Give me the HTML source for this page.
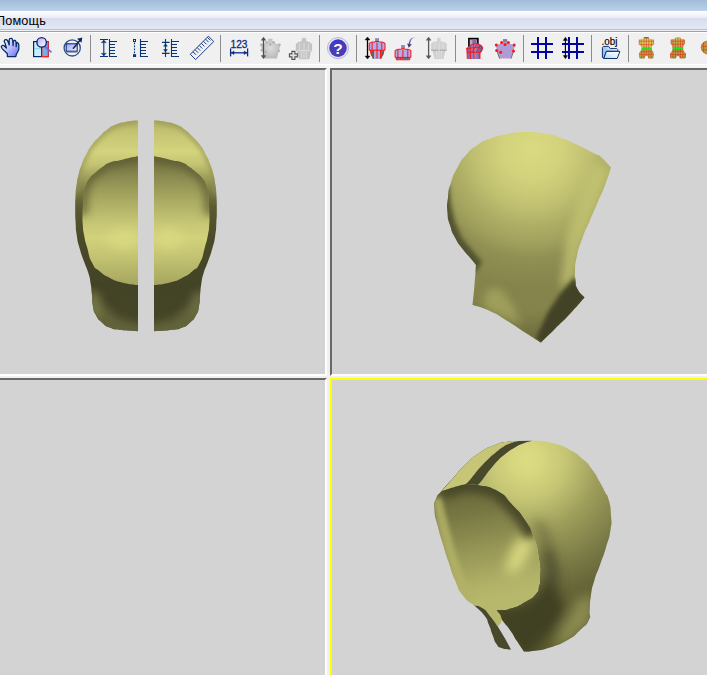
<!DOCTYPE html>
<html><head><meta charset="utf-8">
<style>
html,body{margin:0;padding:0;}
body{width:707px;height:675px;overflow:hidden;background:#f0f0f0;position:relative;font-family:"Liberation Sans",sans-serif;}
.abs{position:absolute;}
#title{left:0;top:0;width:707px;height:11px;background:linear-gradient(#a2bbd8,#b9d1ea);}
#menu{left:0;top:11px;width:707px;height:18px;background:linear-gradient(#ffffff 0px,#e9ecf6 7px,#d8dcee 7px,#e3e8f6 18px);}
#menul1{left:0;top:29px;width:707px;height:1px;background:#b9bfd2;}
#menul2{left:0;top:30px;width:707px;height:1px;background:#eef0f4;}
#menul3{left:0;top:31px;width:707px;height:1px;background:#a0a0a0;}
#menul4{left:0;top:32px;width:707px;height:1px;background:#ffffff;}
#menutext{left:-4px;top:13px;font-size:12.7px;letter-spacing:0.15px;line-height:16px;color:#000;white-space:nowrap;}
#tb{left:0;top:33px;width:707px;height:31px;background:#f0f0f0;}
#tbl1{left:0;top:64px;width:707px;height:1px;background:#ffffff;}
#tbl2{left:0;top:65px;width:707px;height:3px;background:#f5f5f5;}
.sep{position:absolute;top:35px;width:1px;height:27px;background:#8c8c8c;}
.vp{position:absolute;background:#d3d3d3;}
#icons{left:0;top:33px;width:707px;height:31px;}
#heads{left:0;top:0;width:707px;height:675px;}
</style></head><body>
<div class="abs" id="title"></div>
<div class="abs" id="menu"></div>
<div class="abs" id="menul1"></div><div class="abs" id="menul2"></div><div class="abs" id="menul3"></div><div class="abs" id="menul4"></div>
<div class="abs" id="menutext">Помощь</div>
<div class="abs" id="tb"></div>
<div class="abs" id="tbl1"></div><div class="abs" id="tbl2"></div>
<div class="sep" style="left:90px"></div>
<div class="sep" style="left:220px"></div>
<div class="sep" style="left:319px"></div>
<div class="sep" style="left:356px"></div>
<div class="sep" style="left:455px"></div>
<div class="sep" style="left:523px"></div>
<div class="sep" style="left:591px"></div>
<div class="sep" style="left:628px"></div>
<!-- viewports -->
<div class="vp" style="left:-2px;top:68px;width:325px;height:304px;border-top:2px solid #696969;border-left:2px solid #696969;border-right:2px solid #fff;border-bottom:2px solid #fff;"></div>
<div class="vp" style="left:330px;top:68px;width:380px;height:304px;border-top:2px solid #696969;border-left:2px solid #696969;border-right:2px solid #fff;border-bottom:2px solid #fff;"></div>
<div class="vp" style="left:-2px;top:378px;width:325px;height:304px;border-top:2px solid #696969;border-left:2px solid #696969;border-right:2px solid #fff;border-bottom:2px solid #fff;"></div>
<div class="vp" style="left:330px;top:378px;width:380px;height:304px;border:2px solid #ffff00;"></div>
<!--ICONS-->
<svg class="abs" id="icons" viewBox="0 33 707 31" width="707" height="31" style="overflow:hidden">
<defs>
<linearGradient id="gHand" x1="0" y1="0" x2="1" y2="1"><stop offset="0" stop-color="#ffffff"/><stop offset="0.45" stop-color="#c8c8ff"/><stop offset="0.8" stop-color="#8c8cf0"/><stop offset="1" stop-color="#705898"/></linearGradient>
<linearGradient id="gLens" x1="0" y1="0" x2="1" y2="1"><stop offset="0" stop-color="#a8a8f8"/><stop offset="0.6" stop-color="#e0e0ff"/><stop offset="1" stop-color="#ffffff"/></linearGradient>
<linearGradient id="gRect" x1="0" y1="0" x2="1" y2="1"><stop offset="0" stop-color="#a0a0ff"/><stop offset="0.6" stop-color="#d0d0ff"/><stop offset="1" stop-color="#ffffff"/></linearGradient>
<linearGradient id="gHelp" x1="0" y1="0" x2="0" y2="1"><stop offset="0" stop-color="#3838d8"/><stop offset="0.35" stop-color="#4a3cb8"/><stop offset="1" stop-color="#4c3cb0"/></linearGradient>
<linearGradient id="gGray" x1="0" y1="0" x2="1" y2="0"><stop offset="0" stop-color="#c8c8c8"/><stop offset="0.5" stop-color="#b4b4b4"/><stop offset="1" stop-color="#a0a0a0"/></linearGradient>
<linearGradient id="gFold" x1="0" y1="1" x2="1" y2="0"><stop offset="0" stop-color="#a4ccf6"/><stop offset="0.5" stop-color="#e4f0fc"/><stop offset="1" stop-color="#ffffff"/></linearGradient>
<linearGradient id="gArr" x1="1" y1="0" x2="0" y2="1"><stop offset="0" stop-color="#d0d0f8"/><stop offset="0.5" stop-color="#6868b0"/><stop offset="1" stop-color="#202060"/></linearGradient>
<linearGradient id="gPurp" x1="0" y1="0" x2="1" y2="0"><stop offset="0" stop-color="#7060a0"/><stop offset="0.5" stop-color="#a888c8"/><stop offset="1" stop-color="#604880"/></linearGradient>
<radialGradient id="gGray9" cx="0.5" cy="0.45" r="0.6"><stop offset="0" stop-color="#dcdcdc"/><stop offset="1" stop-color="#b8b8b8"/></radialGradient>
<linearGradient id="gFoldB" x1="0" y1="0" x2="1" y2="0"><stop offset="0" stop-color="#90c0f4"/><stop offset="0.6" stop-color="#d8e8fc"/><stop offset="1" stop-color="#ffffff"/></linearGradient>
<linearGradient id="gBody" x1="0" y1="0" x2="0" y2="1"><stop offset="0" stop-color="#d6d66c"/><stop offset="0.4" stop-color="#cccc64"/><stop offset="0.55" stop-color="#a4a44c"/><stop offset="0.8" stop-color="#b0a850"/><stop offset="1" stop-color="#a09040"/></linearGradient>
<linearGradient id="gBody2" x1="0" y1="0" x2="0" y2="1"><stop offset="0" stop-color="#c8c864"/><stop offset="0.4" stop-color="#b8b458"/><stop offset="0.55" stop-color="#98984a"/><stop offset="0.8" stop-color="#b0a850"/><stop offset="1" stop-color="#988c40"/></linearGradient>
</defs>
<!-- 1 hand -->
<path d="M7.3 56.5 L7.4 53.8 L2.1 48.6 L1.2 46.6 L2.4 45.3 L3.8 45.5 L6.4 48 L5.2 43.6 L4.1 41.2 L4.8 39.8 L6.4 39.5 L7.8 41 L9.2 45 L9.2 40 L9.8 38.5 L11.8 38.4 L12.6 39.8 L13.1 45.6 L13.3 41.5 L14.2 40.4 L15.4 40.4 L16 42 L16.2 46.6 L16.4 43.5 L17.2 42.4 L18.4 43.4 L18.8 45 L18.8 49.2 L17.8 51.7 L16.4 54.2 L15.8 56.5 Z" fill="url(#gHand)" stroke="#002c6c" stroke-width="1.25" stroke-linejoin="round"/>
<!-- 2 zoom grid -->
<rect x="33.6" y="41.6" width="14.6" height="15" fill="#c4f0ff" stroke="#002a6a" stroke-width="1.2"/>
<line x1="34" y1="48.7" x2="48" y2="48.7" stroke="#90c8e8" stroke-width="1"/>
<rect x="41.8" y="41.8" width="6.4" height="14.8" fill="#78ace4" stroke="#ff2020" stroke-width="1.1"/>
<line x1="41.5" y1="42" x2="41.5" y2="56.5" stroke="#002a6a" stroke-width="0.8"/>
<line x1="45.5" y1="47" x2="51" y2="51.8" stroke="#7468c8" stroke-width="1.7" stroke-linecap="round"/>
<circle cx="41.6" cy="42.4" r="4.7" fill="url(#gLens)" stroke="#10206c" stroke-width="1.3"/>
<!-- 3 circle rect arrow -->
<circle cx="72.2" cy="47.9" r="8.1" fill="none" stroke="#2c4c80" stroke-width="1.3"/>
<rect x="66.2" y="43.8" width="11" height="7.4" fill="url(#gRect)" stroke="#10306c" stroke-width="1.1"/>
<line x1="66" y1="52.4" x2="77.5" y2="52.4" stroke="#7c94b8" stroke-width="0.9"/>
<line x1="73" y1="48.7" x2="80" y2="40.2" stroke="#0c2c64" stroke-width="1.6"/>
<path d="M77 38.8 L82.3 37.6 L81.5 42.8 Z" fill="#0c2c64"/>
<!-- 4 height lines -->
<g stroke="#083478" stroke-width="1.1" fill="none">
<path d="M100 39.5 H108 M100 56.5 H108 M103.8 39.5 V56.5"/>
<path d="M101.3 42.6 L103.8 40.4 L106.3 42.6 Z M101.3 53.4 L103.8 55.6 L106.3 53.4 Z" fill="#083478" stroke-width="0.5"/>
<path d="M109.5 39 V57 M109.5 41.5 H117.0 M109.5 56.5 H117.0 M109.5 44.5 H115.0 M109.5 47.5 H115.0 M109.5 50.5 H115.0 M109.5 53.5 H115.0"/>
</g>
<!-- 5 dotted -->
<g stroke="#083478" stroke-width="1.1" fill="none">
<rect x="133.5" y="39.5" width="2" height="2" stroke-width="1"/>
<line x1="134.5" y1="42.5" x2="134.5" y2="54" stroke-dasharray="1.8 1.2"/>
<rect x="133" y="54.2" width="3.1" height="2.8" fill="#083478" stroke="none"/>
<path d="M140.5 39 V57 M140.5 41.5 H148.0 M140.5 56.5 H148.0 M140.5 44.5 H146.0 M140.5 47.5 H146.0 M140.5 50.5 H146.0 M140.5 53.5 H146.0"/>
</g>
<!-- 6 -->
<g stroke="#083478" stroke-width="1.1" fill="none">
<path d="M165.5 39 V57 M162 42.4 H169.6 M162 53.4 H169.6"/>
<path d="M163.6 46.2 L165.5 43.8 L167.4 46.2 Z M163.6 49.6 L165.5 52 L167.4 49.6 Z" fill="#083478" stroke-width="0.5"/>
<path d="M171.5 39 V57 M171.5 41.5 H179.0 M171.5 56.5 H179.0 M171.5 44.5 H177.0 M171.5 47.5 H177.0 M171.5 50.5 H177.0 M171.5 53.5 H177.0"/>
</g>
<!-- 7 ruler -->
<g stroke="#1c3c84" stroke-width="1" fill="none">
<path d="M208.4 36.2 L213.8 41.5 L195.6 59.6 L190.3 54.3 Z"/>
<path d="M192.9 51.7 L196 54.8 M195 49.6 L198.1 52.7 M197.1 47.5 L200.2 50.6 M199.2 45.4 L202.3 48.5 M201.3 43.3 L204.4 46.4 M203.4 41.2 L206.5 44.3 M205.5 39.1 L208.6 42.2 M207.3 37.3 L210.4 40.4"/>
</g>
<!-- 8 123 -->
<text x="230.6" y="48" font-family="Liberation Sans, sans-serif" font-size="10px" fill="#0c2c84" stroke="#0c2c84" stroke-width="0.3" textLength="16.8" lengthAdjust="spacingAndGlyphs">123</text>
<g stroke="#0c2c84" stroke-width="1.3" fill="#0c2c84">
<line x1="230.6" y1="48.4" x2="230.6" y2="56.4"/><line x1="247.6" y1="48.4" x2="247.6" y2="56.4"/>
<line x1="231" y1="52.8" x2="247" y2="52.8"/>
<path d="M231.4 52.8 L234 51 L234 54.6 Z M246.8 52.8 L244.2 51 L244.2 54.6 Z" stroke-width="0.5"/>
</g>
<!-- 9 gray torso + arrow (disabled) -->
<path d="M268 38.8 H272.6 V42 L275.5 43.5 L280.2 44.3 L279.3 50 L276.8 58.4 H264.5 L262 50 L260.7 44.3 L265 43.5 L268 42 Z" fill="url(#gGray9)"/>
<g fill="#b4b4b4"><circle cx="266.6" cy="42.3" r="1.4"/><circle cx="273.6" cy="42.3" r="1.4"/><circle cx="270.2" cy="44.4" r="1.4"/><circle cx="261.4" cy="44.8" r="1.4"/><circle cx="279.4" cy="44.8" r="1.4"/><circle cx="261.9" cy="50.2" r="1.4"/><circle cx="278.7" cy="50.8" r="1.4"/><circle cx="265.8" cy="52" r="1.4"/></g>
<g stroke="#505050" stroke-width="1.3" fill="#505050">
<line x1="263.5" y1="39" x2="263.5" y2="57"/>
<path d="M263.5 37.1 L261.2 40.3 H265.8 Z M263.5 58.8 L261.2 55.6 H265.8 Z" stroke-width="0.4"/>
</g>
<!-- 10 gray torso + plus -->
<path d="M302.3 38.4 H305.7 V41.6 L309.5 42.6 L311.6 44 V50.7 L310.4 51.5 L309 58.8 H299.3 L297.6 51.5 L296.3 50.7 V44 L298.4 42.6 L302.3 41.6 Z" fill="#c6c6c6" stroke="#b0b0b0" stroke-width="0.6"/>
<path d="M299.6 43.5 V50 M304 43 V58.5 M308.4 43.5 V50 M296.8 50.6 H311.2 M301.6 51 V58.5 M306.4 51 V58.5" stroke="#dedede" stroke-width="0.9" fill="none"/>
<path d="M291.9 51.4 H294.9 V53.9 H297.4 V56.9 H294.9 V59.4 H291.9 V56.9 H289.4 V53.9 H291.9 Z" fill="#e2e2e2" stroke="#545454" stroke-width="1.1"/>
<!-- 11 help -->
<circle cx="338" cy="48.1" r="10.6" fill="#e6e9e6" stroke="#a4aaec" stroke-width="0.8"/>
<circle cx="338" cy="48.1" r="8.8" fill="url(#gHelp)"/>
<text x="338" y="53.6" text-anchor="middle" font-family="Liberation Sans, sans-serif" font-weight="bold" font-size="15.5px" fill="#ffffff">?</text>
<!-- 12 torso red + black arrow -->
<g stroke="#000" stroke-width="1.3" fill="#000">
<line x1="367.5" y1="39" x2="367.5" y2="57"/>
<path d="M367.5 37 L365 40 H370 Z M367.5 59 L365 56 H370 Z" stroke-width="0.4"/>
</g>
<rect x="375.1" y="38.2" width="3.9" height="3.6" fill="#9484a6"/>
<path d="M370.4 50.2 L371 54 L372.4 58.6 H381.8 L383.2 54 L383.8 50.2 Z" fill="#567462"/>
<path d="M373.3 50.2 H380.6 V58.6 H373.3 Z" fill="#aca4dc"/>
<path d="M372 42 H374.8 L375.2 41.5 H378.9 L379.3 42 H382.2 L385 43.2 V50.2 H369.2 V43.2 Z" fill="#b0acec" stroke="#ff0c0c" stroke-width="1"/>
<path d="M372.1 42.5 V50 M377 42.5 V58.4 M381.8 42.5 V50 M373.3 50.2 V58.6 M380.6 50.2 V58.6 M370.4 50.2 L371 54 L371.8 56 M383.8 50.2 L383.2 54 L382.4 56" stroke="#ff0c0c" stroke-width="0.95" fill="none"/>
<!-- 13 small torso + curved arrow -->
<rect x="401.1" y="45.1" width="3.8" height="3.8" fill="#9484a6"/>
<path d="M396.2 57.4 H409.8 V59.8 H396.2 Z" fill="#7888a8" stroke="#ff0c0c" stroke-width="0.8"/>
<path d="M397.8 49.3 H400.8 L401.2 48.8 H404.8 L405.2 49.3 H408.2 L410.9 50.4 V57.4 H395.1 V50.4 Z" fill="#b0acec" stroke="#ff0c0c" stroke-width="1"/>
<path d="M397.9 50 V59.6 M402.9 50 V59.6 M407.8 50 V59.6 M400.4 57.6 V59.6 M405.4 57.6 V59.6" stroke="#ff0c0c" stroke-width="0.95" fill="none"/>
<path d="M416.8 38.8 C412.8 36.6 410.8 40 410.1 43.9 L411.9 44.4 L408.8 47.8 L407.1 43.4 L408.7 43.7 C409.4 39 412.4 35.6 416.8 38.8 Z" fill="url(#gArr)"/>
<!-- 14 gray torso + gray arrow -->
<g stroke="#585858" stroke-width="1.3" fill="#585858">
<line x1="428.6" y1="39" x2="428.6" y2="57"/>
<path d="M428.6 37 L426.2 40.2 H431 Z M428.6 59 L426.2 55.8 H431 Z" stroke-width="0.4"/>
</g>
<path d="M437.2 37.8 H440.6 V41.2 L444.5 42 L446.8 43.6 V49.6 H431.1 V43.6 L433.4 42 L437.2 41.2 Z" fill="#d2d2d2"/>
<path d="M432.6 51 L433.6 55 L434.6 59 H443.4 L444.4 55 L445.3 51 Z" fill="#cecece"/>
<path d="M431.2 49.4 H446.7 V51 H431.2 Z" fill="#b2b2b2"/>
<path d="M435 43 V49 M439 43 V58.5 M443 43 V49 M436.5 51 V58.5 M441.5 51 V58.5" stroke="#e2e2e2" stroke-width="0.9" fill="none"/>
<!-- 15 purple torso in frame -->
<rect x="468.9" y="38.6" width="9" height="8" fill="#b8a8b4" stroke="#000" stroke-width="1.6"/>
<rect x="472.4" y="39.5" width="4" height="6" fill="#8c64b4"/>
<path d="M470 45.5 L473 44 L478 43.8 L481.5 45.5 L483 48 L482 51.5 L480 53 L480 59 H467.5 L467 52 L466.4 48 Z" fill="url(#gPurp)"/>
<path d="M470 45.5 L473 44 L478 43.8 L481.5 45.5 L483 48 M466.8 48 L467.3 59 M467 52.3 H480.3 M466.6 48.5 L480 47 M470 45.5 L470.5 59 M473.6 44 L474 59 M477 44 L472 52 M480.3 45 L476.5 52 M480 53 V59 M482.8 48 L480.2 53" stroke="#ff1010" stroke-width="0.9" fill="none"/>
<!-- 16 torso with dots -->
<path d="M503 39.2 H507.1 V42.5 L510 44 L515 44.8 L513.6 51 L511 58.6 H499.6 L497 51 L495.8 44.8 L500 44 L503 42.5 Z" fill="#b09cd4"/>
<path d="M497 51 L499.6 58.6 M513.6 51 L511 58.6" stroke="#6c6454" stroke-width="0.9" fill="none"/>
<rect x="503" y="39.2" width="4.1" height="2.5" fill="#887898"/>
<g fill="#ff1414"><circle cx="501.6" cy="42.5" r="1.5"/><circle cx="508.4" cy="42.5" r="1.5"/><circle cx="505" cy="44.6" r="1.5"/><circle cx="496.3" cy="45" r="1.5"/><circle cx="514.2" cy="45" r="1.5"/><circle cx="496.7" cy="50.4" r="1.5"/><circle cx="513.5" cy="51" r="1.5"/><circle cx="500.6" cy="52.3" r="1.5"/></g>
<!-- 17 hash -->
<g fill="#0404a0">
<rect x="537" y="37" width="2" height="22"/><rect x="545" y="37" width="2" height="22"/>
<rect x="531" y="43" width="22" height="2"/><rect x="531" y="51" width="22" height="2"/>
</g>
<!-- 18 hash + arrow -->
<g fill="#0404a0">
<rect x="568" y="37" width="2" height="22"/><rect x="576" y="37" width="2" height="22"/>
<rect x="562" y="43" width="22" height="2"/><rect x="562" y="51" width="22" height="2"/>
</g>
<g stroke="#000" stroke-width="1.1" fill="#000">
<line x1="565.4" y1="39" x2="565.4" y2="57"/>
<path d="M565.4 37.2 L563.2 40.4 H567.6 Z M565.4 58.8 L563.2 55.6 H567.6 Z" stroke-width="0.4"/>
</g>
<!-- 19 .obj folder -->
<text x="601.6" y="44.8" font-family="Liberation Sans, sans-serif" font-size="10.5px" fill="#000" stroke="#000" stroke-width="0.15" textLength="15.8" lengthAdjust="spacingAndGlyphs">.obj</text>
<path d="M603.4 46.4 H608.6 L610.2 48.6 H616.8 L617.8 49.6 V51.2 H606.4 L603.7 58.4 L602.4 57.4 V47.4 Z" fill="url(#gFoldB)" stroke="#0c3470" stroke-width="1" stroke-linejoin="round"/>
<path d="M606.4 51.4 H619.9 L617.2 58.5 H603.7 Z" fill="url(#gFold)" stroke="#0c3470" stroke-width="1" stroke-linejoin="round"/>
<!-- 20 body front -->
<g>
<path d="M643.9 37 H648.7 L649 38.6 L653.2 39.2 L653.8 41 L653.6 44.7 L652.2 46 L651.8 48 L651.9 50 L653.8 53 L653.8 55.5 L653.2 58.6 H648.3 L647.9 56.4 L646.5 55.6 L645.1 56.4 L644.7 58.6 H639.5 L638.9 55.5 L638.9 53 L641.4 50 L641.5 48 L641 46 L639.2 44.7 L638.9 41 L639.5 39.2 L643.6 38.6 Z" fill="url(#gBody)"/>
<rect x="643.9" y="37" width="4.8" height="1.5" fill="#74742e"/>
<path d="M641.3 39.5 V46 M644 38.5 V58 M646.4 38.5 V55.6 M648.8 38.5 V58 M651.4 39.5 V46 M639 41.2 H653.8 M639.5 44.6 H653.2 M640.5 51.8 H652.8 M639 54.4 H653.8 M641.6 50 V58.4 M651.2 50 V58.4 M639.2 39.6 V44.6 M653.6 39.6 V44.6" stroke="#e8401c" stroke-width="0.8" fill="none" opacity="0.8"/>
<path d="M641.5 49 H651.8" stroke="#18e818" stroke-width="1.7"/>
</g>
<!-- 21 body back -->
<g>
<path d="M675.6 37 H680.3 L680.6 38.6 L684.2 39.2 L684.7 41 L684.5 44.3 L682.8 46.5 L682.6 48.2 L682.9 50 L685.9 53.5 L685.8 55.5 L685 58.6 H679.8 L679.2 56.6 L677.9 56 L676.6 56.6 L676 58.6 H670.9 L670.1 55.5 L670 53.5 L672.7 50 L672.8 48.2 L672.6 46.5 L671 44.3 L670.8 41 L671.3 39.2 L675.3 38.6 Z" fill="url(#gBody2)"/>
<path d="M673 39.5 V58 M675.4 38.5 V58 M677.9 38 V56 M680.4 38.5 V58 M682.8 39.5 V58 M671 41.2 H684.6 M671.4 44.2 H684.2 M672.4 51.4 H683.4 M670.2 54.4 H685.8 M671.2 39.6 V44 M684.4 39.6 V44 M670.6 53.5 V58 M685.4 53.5 V58" stroke="#e03c1c" stroke-width="0.85" fill="none" opacity="0.85"/>
<path d="M672.8 48.3 H682.7" stroke="#18e818" stroke-width="1.6"/>
</g>
<!-- 22 partial -->
<path d="M707 41.2 L704 42 L701.8 44.4 L701.2 47.5 L702 50.5 L704.4 53 L707 54 Z" fill="#b09848"/>
<path d="M707 41.2 L704 42 L701.8 44.4 L701.2 47.5 L702 50.5 L704.4 53 L707 54 M703.5 42.4 V52.4 M701.5 46.5 H707 M702 50 H707" fill="none" stroke="#e0401c" stroke-width="0.8" opacity="0.85"/>
</svg>
</svg>
<!--/ICONS-->
<!--HEADS-->
<svg class="abs" id="heads" viewBox="0 0 707 675" width="707" height="675" style="overflow:hidden">
<defs>
<filter id="b2" x="-30%" y="-30%" width="160%" height="160%"><feGaussianBlur stdDeviation="2"/></filter>
<filter id="b4" x="-30%" y="-30%" width="160%" height="160%"><feGaussianBlur stdDeviation="4"/></filter>
<filter id="b6" x="-30%" y="-30%" width="160%" height="160%"><feGaussianBlur stdDeviation="6"/></filter>
<filter id="b10" x="-40%" y="-40%" width="180%" height="180%"><feGaussianBlur stdDeviation="10"/></filter>
<filter id="b1" x="-30%" y="-30%" width="160%" height="160%"><feGaussianBlur stdDeviation="1"/></filter>
<clipPath id="h1clip"><path d="M138 120.2 C134.1 120.7 133.7 120.2 126.3 121.7 C118.9 123.2 122.3 121.9 115.9 124.6 C109.5 127.3 112.4 125.8 107.0 129.8 C101.6 133.8 104.5 131.6 99.6 136.5 C94.7 141.4 96.6 138.7 92.2 144.6 C87.8 150.5 89.7 147.9 86.3 154.3 C82.9 160.7 84.5 157.2 81.9 163.9 C79.3 170.6 80.3 167.4 78.6 174.3 C76.9 181.2 77.7 177.7 76.7 184.6 C75.7 191.5 76.1 186.5 75.6 195.0 C75.1 203.5 75.2 201.0 75.2 210.0 C75.2 219.0 75.1 213.7 75.6 222.0 C76.1 230.3 75.4 226.2 76.7 235.0 C78.0 243.8 77.1 239.4 79.6 248.3 C82.1 257.2 81.1 253.3 84.1 261.7 C87.1 270.1 86.3 266.1 88.5 273.5 C90.7 280.9 89.6 277.0 90.7 283.9 C91.8 290.8 91.1 286.9 91.9 294.3 C92.7 301.7 91.7 299.2 93.0 306.1 C94.3 313.0 92.9 309.6 95.9 315.0 C98.9 320.4 97.2 318.2 101.9 322.4 C106.6 326.6 103.8 325.1 110.0 327.6 C116.2 330.1 111.1 328.6 120.4 329.8 C129.7 331.0 132.1 330.8 138.0 331.3 Z"/><path d="M154 120.2 C157.9 120.7 158.3 120.2 165.7 121.7 C173.1 123.2 169.7 121.9 176.1 124.6 C182.5 127.3 179.6 125.8 185.0 129.8 C190.4 133.8 187.5 131.6 192.4 136.5 C197.3 141.4 195.4 138.7 199.8 144.6 C204.2 150.5 202.3 147.9 205.7 154.3 C209.1 160.7 207.5 157.2 210.1 163.9 C212.7 170.6 211.7 167.4 213.4 174.3 C215.1 181.2 214.3 177.7 215.3 184.6 C216.3 191.5 215.9 186.5 216.4 195.0 C216.9 203.5 216.8 201.0 216.8 210.0 C216.8 219.0 216.9 213.7 216.4 222.0 C215.9 230.3 216.6 226.2 215.3 235.0 C214.0 243.8 214.9 239.4 212.4 248.3 C209.9 257.2 210.9 253.3 207.9 261.7 C204.9 270.1 205.7 266.1 203.5 273.5 C201.3 280.9 202.4 277.0 201.3 283.9 C200.2 290.8 200.9 286.9 200.1 294.3 C199.3 301.7 200.3 299.2 199.0 306.1 C197.7 313.0 199.1 309.6 196.1 315.0 C193.1 320.4 194.8 318.2 190.1 322.4 C185.4 326.6 188.2 325.1 182.0 327.6 C175.8 330.1 180.9 328.6 171.6 329.8 C162.3 331.0 159.9 330.8 154.0 331.3 Z"/></clipPath>
<clipPath id="h1in"><path d="M138 156.2 C135.1 156.8 135.2 156.7 129.3 158.0 C123.4 159.3 126.8 158.7 120.4 160.2 C114.0 161.7 115.9 160.2 110.0 162.4 C104.1 164.6 107.5 163.4 102.6 166.9 C97.7 170.4 99.6 168.9 95.2 172.8 C90.8 176.7 92.5 174.3 89.3 178.7 C86.1 183.1 87.5 180.7 85.6 186.1 C83.7 191.5 84.5 189.1 83.6 195.0 C82.7 200.9 83.3 197.2 83.0 203.9 C82.7 210.6 82.7 208.0 82.6 215.0 C82.5 222.0 82.3 218.3 82.8 225.0 C83.3 231.7 82.7 227.7 84.1 235.0 C85.5 242.3 84.3 237.5 87.0 246.9 C89.7 256.3 88.0 255.0 92.2 263.1 C96.4 271.2 93.7 266.3 99.6 271.3 C105.5 276.3 102.6 274.3 110.0 278.0 C117.4 281.7 112.6 280.0 121.9 282.4 C131.2 284.8 132.6 284.2 138.0 285.1 Z"/><path d="M154 156.2 C156.9 156.8 156.8 156.7 162.7 158.0 C168.6 159.3 165.2 158.7 171.6 160.2 C178.0 161.7 176.1 160.2 182.0 162.4 C187.9 164.6 184.5 163.4 189.4 166.9 C194.3 170.4 192.4 168.9 196.8 172.8 C201.2 176.7 199.5 174.3 202.7 178.7 C205.9 183.1 204.5 180.7 206.4 186.1 C208.3 191.5 207.5 189.1 208.4 195.0 C209.3 200.9 208.7 197.2 209.0 203.9 C209.3 210.6 209.3 208.0 209.4 215.0 C209.5 222.0 209.7 218.3 209.2 225.0 C208.7 231.7 209.3 227.7 207.9 235.0 C206.5 242.3 207.7 237.5 205.0 246.9 C202.3 256.3 204.0 255.0 199.8 263.1 C195.6 271.2 198.3 266.3 192.4 271.3 C186.5 276.3 189.4 274.3 182.0 278.0 C174.6 281.7 179.4 280.0 170.1 282.4 C160.8 284.8 159.4 284.2 154.0 285.1 Z"/></clipPath>
<linearGradient id="h1shell" gradientUnits="userSpaceOnUse" x1="0" y1="120" x2="0" y2="332"><stop offset="0" stop-color="#b2b266"/><stop offset="0.07" stop-color="#c6c674"/><stop offset="0.15" stop-color="#d4d47e"/><stop offset="0.212" stop-color="#c2c272"/><stop offset="0.255" stop-color="#a8a862"/><stop offset="0.307" stop-color="#8a8a50"/><stop offset="0.354" stop-color="#70703f"/><stop offset="0.41" stop-color="#5c5c34"/><stop offset="0.448" stop-color="#55552e"/><stop offset="0.566" stop-color="#4a4a29"/><stop offset="0.78" stop-color="#434326"/><stop offset="1" stop-color="#454527"/></linearGradient>
<linearGradient id="h1int" gradientUnits="userSpaceOnUse" x1="0" y1="156" x2="0" y2="286"><stop offset="0" stop-color="#68683b"/><stop offset="0.18" stop-color="#8e8e52"/><stop offset="0.34" stop-color="#aaaa62"/><stop offset="0.50" stop-color="#c4c474"/><stop offset="0.63" stop-color="#d2d27c"/><stop offset="0.80" stop-color="#c0c070"/><stop offset="1" stop-color="#a4a45f"/></linearGradient>
<clipPath id="h2clip"><path d="M611.0 167.5 C609.0 173.3 609.5 173.3 605.0 185.0 C600.5 196.7 602.5 190.8 597.5 202.5 C592.5 214.2 595.0 208.3 590.0 220.0 C585.0 231.7 586.8 225.8 582.5 237.5 C578.2 249.2 579.5 244.2 577.0 255.0 C574.5 265.8 575.5 261.7 575.0 270.0 C574.5 278.3 574.7 273.7 575.5 280.0 C576.3 286.3 574.5 283.2 577.5 289.0 C580.5 294.8 582.2 294.7 584.5 297.5 C579.7 302.9 579.8 303.3 570.0 313.8 C560.2 324.2 564.7 319.2 555.0 328.8 C545.3 338.3 545.7 337.9 541.0 342.5 C535.7 339.2 536.2 339.7 525.0 332.5 C513.8 325.3 519.2 328.2 507.5 321.0 C495.8 313.8 501.7 316.3 490.0 311.0 C478.3 305.7 478.3 307.0 472.5 305.0 C473.2 298.3 473.3 298.3 474.5 285.0 C475.7 271.7 475.5 271.7 476.0 265.0 C474.3 262.9 475.5 264.2 471.0 258.8 C466.5 253.3 467.8 255.8 462.5 248.8 C457.2 241.7 459.2 245.4 455.0 237.5 C450.8 229.6 452.5 233.3 450.0 225.0 C447.5 216.7 448.2 221.7 447.5 212.5 C446.8 203.3 446.8 207.5 448.0 197.5 C449.2 187.5 447.8 192.5 451.0 182.5 C454.2 172.5 452.5 176.7 457.5 167.5 C462.5 158.3 459.3 162.5 466.0 155.0 C472.7 147.5 469.5 150.4 477.5 145.0 C485.5 139.6 480.8 142.2 490.0 138.8 C499.2 135.2 493.3 136.8 505.0 134.5 C516.7 132.2 511.7 132.2 525.0 132.0 C538.3 131.8 533.3 131.9 545.0 133.8 C556.7 135.6 549.2 133.8 560.0 137.5 C570.8 141.2 565.8 139.6 577.5 145.0 C589.2 150.4 587.5 150.1 595.0 153.8 C602.5 157.4 594.7 151.4 600.0 156.0 C605.3 160.6 607.3 163.7 611.0 167.5 Z"/></clipPath>
<radialGradient id="h2g" gradientUnits="userSpaceOnUse" cx="532" cy="150" r="200"><stop offset="0" stop-color="#dada82"/><stop offset="0.15" stop-color="#d2d27c"/><stop offset="0.3" stop-color="#bebe70"/><stop offset="0.38" stop-color="#aeae66"/><stop offset="0.46" stop-color="#a2a25e"/><stop offset="0.54" stop-color="#909054"/><stop offset="0.685" stop-color="#84844c"/><stop offset="0.8" stop-color="#84844c"/><stop offset="0.925" stop-color="#707040"/></radialGradient>
<clipPath id="h3R"><path d="M532.5 440.5 C535.0 440.7 532.5 439.9 540.0 441.0 C547.5 442.1 545.0 440.8 555.0 443.8 C565.0 446.8 560.8 445.0 570.0 450.0 C579.2 455.0 575.0 452.1 582.5 458.8 C590.0 465.4 586.7 462.1 592.5 470.0 C598.3 477.9 595.8 475.2 600.0 482.5 C604.2 489.8 602.1 486.2 605.0 492.0 C607.9 497.8 606.8 492.3 608.8 500.0 C610.8 507.7 610.4 505.0 611.0 515.0 C611.6 525.0 612.2 519.2 610.5 530.0 C608.8 540.8 609.5 535.8 606.0 547.5 C602.5 559.2 603.8 554.2 600.0 565.0 C596.2 575.8 597.5 570.0 594.5 580.0 C591.5 590.0 592.7 585.0 591.0 595.0 C589.3 605.0 590.2 601.7 589.5 610.0 C588.8 618.3 591.9 613.3 588.8 620.0 C585.6 626.7 587.1 623.3 580.0 630.0 C572.9 636.7 577.5 634.2 567.5 640.0 C557.5 645.8 560.8 643.9 550.0 647.5 C539.2 651.1 543.7 649.4 535.0 650.8 C526.3 652.1 527.7 651.2 524.0 651.5 C521.6 647.8 521.2 647.5 516.7 640.5 C512.2 633.5 515.5 637.6 510.4 630.4 C505.3 623.2 506.1 625.7 501.5 619.0 C496.9 612.3 498.2 613.1 496.5 610.2 C501.1 609.6 500.7 611.2 510.4 608.3 C520.1 605.4 517.1 606.2 525.5 601.4 C533.9 596.6 531.2 598.9 535.6 593.9 C540.0 588.9 537.2 591.8 538.7 586.3 C540.2 580.8 540.0 587.1 540.0 577.5 C540.0 567.9 540.8 570.8 538.8 557.5 C536.7 544.2 538.3 550.0 533.8 537.5 C529.2 525.0 532.1 530.8 525.0 520.0 C517.9 509.2 521.7 514.7 512.5 505.0 C503.3 495.3 509.2 497.7 497.5 491.0 C485.8 484.3 484.2 487.0 477.5 485.0 C478.6 483.9 478.1 485.1 480.9 481.7 C483.7 478.3 482.3 479.7 486.0 474.9 C489.7 470.1 488.0 472.1 492.0 467.3 C496.0 462.5 493.7 464.8 497.9 460.5 C502.1 456.2 499.6 458.5 504.7 454.5 C509.8 450.5 507.3 452.2 513.2 448.6 C519.1 445.0 516.1 446.4 522.5 443.8 C528.9 441.2 529.2 441.8 532.5 440.8 Z"/></clipPath>
<clipPath id="h3L"><path d="M518.3 441 C514.5 441.3 514.8 440.5 507.0 441.8 C499.2 443.1 504.0 441.4 495.0 445.0 C486.0 448.6 490.0 445.8 480.0 452.5 C470.0 459.2 474.2 456.2 465.0 465.0 C455.8 473.8 460.0 470.4 452.5 478.8 C445.0 487.1 448.0 483.3 442.5 490.0 C437.0 496.7 438.7 492.1 436.0 498.8 C433.3 505.4 434.0 501.2 434.5 510.0 C435.0 518.8 434.8 514.2 437.5 525.0 C440.2 535.8 438.8 530.0 442.5 542.5 C446.2 555.0 444.6 550.0 448.8 562.5 C452.9 575.0 450.4 569.2 455.0 580.0 C459.6 590.8 456.2 586.6 462.5 595.0 C468.8 603.4 470.1 601.8 473.9 605.2 C476.8 606.2 477.3 604.7 482.7 608.3 C488.1 611.9 485.0 609.9 490.0 616.0 C495.0 622.1 495.2 623.1 497.8 626.6 C499.0 624.1 501.9 624.5 501.5 619.0 C501.1 613.5 498.2 613.1 496.5 610.2 C501.1 609.6 500.7 611.2 510.4 608.3 C520.1 605.4 517.1 606.2 525.5 601.4 C533.9 596.6 531.2 598.9 535.6 593.9 C540.0 588.9 537.2 591.8 538.7 586.3 C540.2 580.8 540.0 587.1 540.0 577.5 C540.0 567.9 540.8 570.8 538.8 557.5 C536.7 544.2 538.3 550.0 533.8 537.5 C529.2 525.0 532.1 530.8 525.0 520.0 C517.9 509.2 521.7 514.7 512.5 505.0 C503.3 495.3 509.2 497.7 497.5 491.0 C485.8 484.3 484.2 487.0 477.5 485.0 L466 484 C467.3 482.7 466.6 483.9 469.9 480.0 C473.2 476.1 471.6 477.5 475.8 472.4 C480.0 467.3 478.1 469.5 482.6 464.7 C487.1 459.9 484.9 462.1 489.4 457.9 C493.9 453.7 491.7 455.7 496.2 452.0 C500.7 448.3 498.5 449.7 503.0 446.9 C507.5 444.1 504.7 445.5 509.8 443.5 C514.9 441.5 515.5 441.8 518.3 441.0 Z"/></clipPath>
<radialGradient id="h3g" gradientUnits="userSpaceOnUse" cx="527" cy="460" r="160"><stop offset="0" stop-color="#dcdc83"/><stop offset="0.1" stop-color="#d6d67f"/><stop offset="0.25" stop-color="#c4c474"/><stop offset="0.46" stop-color="#9c9c5a"/><stop offset="0.68" stop-color="#7c7c48"/><stop offset="0.85" stop-color="#666639"/><stop offset="1" stop-color="#58582f"/></radialGradient>
<linearGradient id="h3i" gradientUnits="userSpaceOnUse" x1="463" y1="491" x2="485" y2="600"><stop offset="0" stop-color="#6a6a3b"/><stop offset="0.2" stop-color="#767643"/><stop offset="0.55" stop-color="#969656"/><stop offset="0.88" stop-color="#b2b268"/><stop offset="1" stop-color="#b8b86c"/></linearGradient>
</defs>
<g clip-path="url(#h1clip)">
<rect x="70" y="115" width="152" height="220" fill="url(#h1shell)"/>
<g filter="url(#b2)">
<path d="M138 120.2 C134.1 120.7 133.7 120.2 126.3 121.7 C118.9 123.2 122.3 121.9 115.9 124.6 C109.5 127.3 112.4 125.8 107.0 129.8 C101.6 133.8 104.5 131.6 99.6 136.5 C94.7 141.4 96.6 138.7 92.2 144.6 C87.8 150.5 89.7 147.9 86.3 154.3 C82.9 160.7 84.5 157.2 81.9 163.9 C79.3 170.6 80.3 167.4 78.6 174.3 C76.9 181.2 77.7 177.7 76.7 184.6 C75.7 191.5 76.0 191.5 75.6 195.0" fill="none" stroke="#909054" stroke-width="7" opacity="0.55"/>
<path d="M154 120.2 C157.9 120.7 158.3 120.2 165.7 121.7 C173.1 123.2 169.7 121.9 176.1 124.6 C182.5 127.3 179.6 125.8 185.0 129.8 C190.4 133.8 187.5 131.6 192.4 136.5 C197.3 141.4 195.4 138.7 199.8 144.6 C204.2 150.5 202.3 147.9 205.7 154.3 C209.1 160.7 207.5 157.2 210.1 163.9 C212.7 170.6 211.7 167.4 213.4 174.3 C215.1 181.2 214.3 177.7 215.3 184.6 C216.3 191.5 216.0 191.5 216.4 195.0" fill="none" stroke="#909054" stroke-width="7" opacity="0.55"/>
</g>
<g filter="url(#b4)">
<path d="M90 300 L102 304 L118 318 L138 324 L154 324 L174 318 L190 304 L202 300 L202 340 L90 340 Z" fill="#62623a"/>
<path d="M88 290 L99 294 L103 310 L97 320 L88 312 Z" fill="#747445"/>
<path d="M204 290 L193 294 L189 310 L195 320 L204 312 Z" fill="#6c6c42"/>
</g>
</g>
<g clip-path="url(#h1in)">
<rect x="70" y="150" width="152" height="140" fill="url(#h1int)"/>
<g filter="url(#b4)">
<path d="M138 156.2 C135.1 156.8 135.2 156.7 129.3 158.0 C123.4 159.3 126.8 158.7 120.4 160.2 C114.0 161.7 115.9 160.2 110.0 162.4 C104.1 164.6 107.5 163.4 102.6 166.9 C97.7 170.4 99.6 168.9 95.2 172.8 C90.8 176.7 92.5 174.3 89.3 178.7 C86.1 183.1 87.5 180.7 85.6 186.1 C83.7 191.5 84.5 189.1 83.6 195.0 C82.7 200.9 83.3 197.2 83.0 203.9 C82.7 210.6 82.7 211.3 82.6 215.0" fill="none" stroke="#585831" stroke-width="9" opacity="0.8"/>
<path d="M154 156.2 C156.9 156.8 156.8 156.7 162.7 158.0 C168.6 159.3 165.2 158.7 171.6 160.2 C178.0 161.7 176.1 160.2 182.0 162.4 C187.9 164.6 184.5 163.4 189.4 166.9 C194.3 170.4 192.4 168.9 196.8 172.8 C201.2 176.7 199.5 174.3 202.7 178.7 C205.9 183.1 204.5 180.7 206.4 186.1 C208.3 191.5 207.5 189.1 208.4 195.0 C209.3 200.9 208.7 197.2 209.0 203.9 C209.3 210.6 209.3 211.3 209.4 215.0" fill="none" stroke="#585831" stroke-width="9" opacity="0.8"/>
</g>
<g filter="url(#b6)">
<ellipse cx="124" cy="239" rx="15" ry="10" fill="#d9d982" opacity="0.9"/>
<ellipse cx="168" cy="239" rx="15" ry="10" fill="#d9d982" opacity="0.9"/>
</g>
</g>
<g clip-path="url(#h2clip)">
<rect x="440" y="125" width="180" height="225" fill="url(#h2g)"/>
<g filter="url(#b4)">
<path d="M486 290 L500 288 L512 304 L522 326 L500 316 L484 308 Z" fill="#b0b066" opacity="0.6"/>
<path d="M592 166 L612 166 L582 250 L574 280 L560 290 L566 240 L578 200 Z" fill="#c4c474" opacity="0.75"/>
</g>
<g filter="url(#b2)">
<path d="M444 180 L449 185 L451 205 L455 222 L462 238 L472 250 L482 262 L476 272 L440 260 Z" fill="#4e4e2b" opacity="0.9"/>
</g>
<g filter="url(#b2)">
<path d="M574 278 L590 298 L541 346 L536 338 L548 312 L560 294 Z" fill="#424226"/>
</g>
</g>
<g clip-path="url(#h3R)">
<rect x="425" y="430" width="195" height="230" fill="url(#h3g)"/>
<g filter="url(#b6)">
<path d="M532 522 L540 536 L545 556 L546 580 L558 580 L556 556 L550 536 L542 520 Z" fill="#4a4a29" opacity="0.5"/>
<path d="M540 550 L546 570 L547 590 L540 606 L558 602 L560 580 L554 552 Z" fill="#40402a" opacity="0.6"/>
<path d="M488 606 L512 609 L528 602 L540 592 L544 578 L556 590 L566 608 L554 628 L540 642 L526 660 L508 640 Z" fill="#3f3f24"/>
<path d="M578 598 L594 594 L592 622 L570 642 L552 652 L560 630 Z" fill="#8a8a50"/>
</g>
</g>
<path d="M518.3 441 C515.5 441.8 514.9 441.5 509.8 443.5 C504.7 445.5 507.5 444.1 503.0 446.9 C498.5 449.7 500.7 448.3 496.2 452.0 C491.7 455.7 493.9 453.7 489.4 457.9 C484.9 462.1 487.1 459.9 482.6 464.7 C478.1 469.5 480.0 467.3 475.8 472.4 C471.6 477.5 473.2 476.1 469.9 480.0 C466.6 483.9 467.3 482.7 466.0 484.0 L477.5 485 C478.6 483.9 478.1 485.1 480.9 481.7 C483.7 478.3 482.3 479.7 486.0 474.9 C489.7 470.1 488.0 472.1 492.0 467.3 C496.0 462.5 493.7 464.8 497.9 460.5 C502.1 456.2 499.6 458.5 504.7 454.5 C509.8 450.5 507.3 452.2 513.2 448.6 C519.1 445.0 516.1 446.4 522.5 443.8 C528.9 441.2 529.2 441.8 532.5 440.8 Z" fill="#48482a"/>
<g clip-path="url(#h3L)">
<rect x="425" y="430" width="195" height="230" fill="url(#h3i)"/>
<g filter="url(#b6)">
<ellipse cx="520" cy="553" rx="9" ry="24" fill="#d6d680" transform="rotate(28 520 553)"/>
</g>
<g filter="url(#b4)">
<path d="M440 492 L448 489 L457 486.3 L466 484 L477.5 485 C487 487 492 488 497.5 491 C505 497 508 500 512.5 505 C518 511 522 515 525 520 L533 536" fill="none" stroke="#464627" stroke-width="17" opacity="0.95"/>
</g>
<g filter="url(#b2)">
<path d="M433 500 L441 497 L447 520 L455 550 L464 578 L474 600 L468 606 L455 580 L446 555 L438 528 Z" fill="#b2b268" opacity="0.85"/>
</g>
<path d="M518.3 441 C514.5 441.3 514.8 440.5 507.0 441.8 C499.2 443.1 504.0 441.4 495.0 445.0 C486.0 448.6 490.0 445.8 480.0 452.5 C470.0 459.2 474.2 456.2 465.0 465.0 C455.8 473.8 460.3 470.1 452.5 478.8 C444.7 487.4 445.2 486.9 441.5 491.0 C443.7 490.3 442.8 490.6 448.0 489.0 C453.2 487.4 451.0 488.0 457.0 486.3 C463.0 484.6 463.0 484.8 466.0 484.0 C467.3 482.7 466.6 483.9 469.9 480.0 C473.2 476.1 471.6 477.5 475.8 472.4 C480.0 467.3 478.1 469.5 482.6 464.7 C487.1 459.9 484.9 462.1 489.4 457.9 C493.9 453.7 491.7 455.7 496.2 452.0 C500.7 448.3 498.5 449.7 503.0 446.9 C507.5 444.1 504.7 445.5 509.8 443.5 C514.9 441.5 515.5 441.8 518.3 441.0 Z" fill="#c6c676"/>
</g>
<path d="M473.85 605.2 C477.2 608.5 478.9 608.4 484.0 615.0 C489.1 621.6 486.1 618.2 489.0 625.0 C491.9 631.8 490.2 629.1 492.8 635.4 C495.2 641.7 493.6 639.8 496.5 644.0 C499.4 648.2 496.7 646.1 501.5 648.0 C506.3 649.9 507.8 649.1 511.0 649.6 L505.3 639 L497.8 626.6 C495.2 623.1 495.0 622.1 490.0 616.0 C485.0 609.9 488.1 611.9 482.7 608.3 C477.3 604.7 476.8 606.2 473.9 605.2 Z" fill="#48482a"/>
</svg>
<!--/HEADS-->
</body></html>
